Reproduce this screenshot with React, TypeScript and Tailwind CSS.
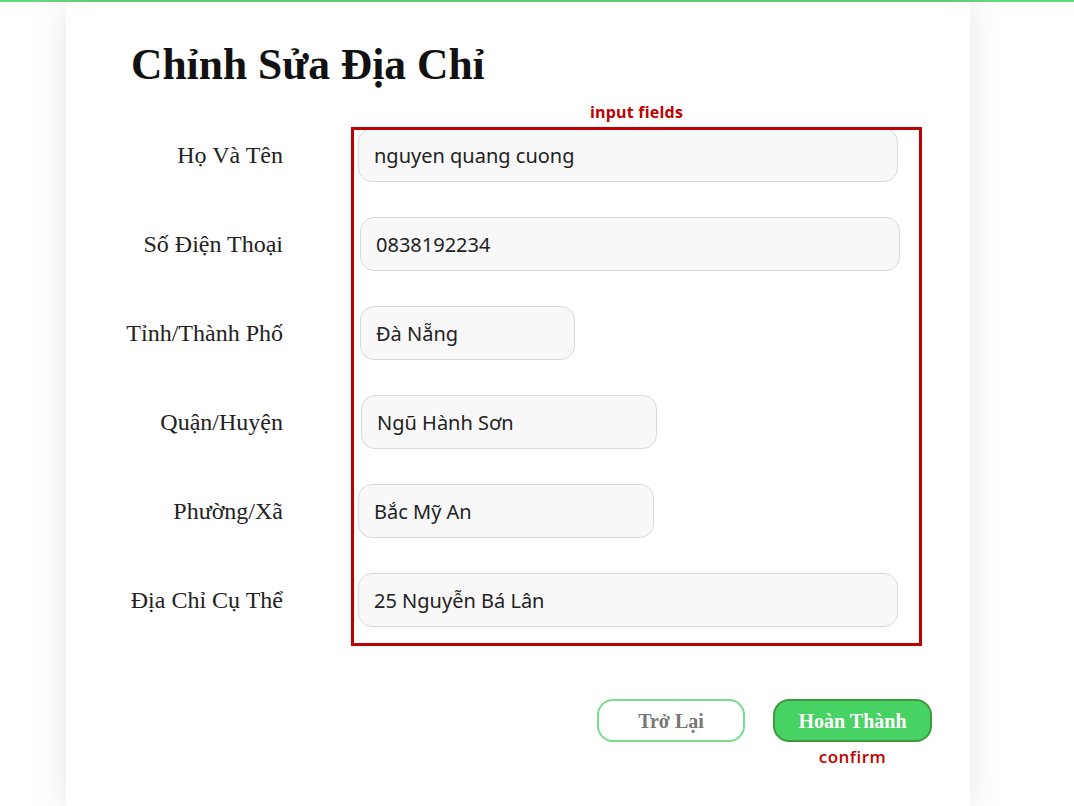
import React from "react";

interface Field {
  label: string;
  value: string;
  offset: number;
  width: number;
}

const fields: Field[] = [
  { label: "Họ Và Tên", value: "nguyen quang cuong", offset: 0, width: 540 },
  { label: "Số Điện Thoại", value: "0838192234", offset: 2, width: 540 },
  { label: "Tỉnh/Thành Phố", value: "Đà Nẵng", offset: 2, width: 215 },
  { label: "Quận/Huyện", value: "Ngũ Hành Sơn", offset: 3, width: 296 },
  { label: "Phường/Xã", value: "Bắc Mỹ An", offset: 0, width: 296 },
  { label: "Địa Chỉ Cụ Thể", value: "25 Nguyễn Bá Lân", offset: 0, width: 540 },
];

const serif = "font-['Liberation_Serif','Times_New_Roman',serif]";

const App: React.FC = () => {
  return (
    <div className="min-h-[806px] w-full bg-white border-t-2 border-[#62d97b]">
      <div className="ml-[66px] w-[904px] min-h-[804px] bg-white shadow-[0_0_36px_rgba(0,0,0,0.10)] pb-10">
        <h1
          className={`${serif} pt-[38px] pl-[65px] text-[43.5px] leading-[48px] font-bold text-[#111]`}
        >
          Chỉnh Sửa Địa Chỉ
        </h1>

        <div className="relative mt-[40px] flex flex-col gap-[35px]">
          {/* annotation overlay */}
          <div className="pointer-events-none absolute left-[285px] top-[-1px] h-[519px] w-[571px] border-[3px] border-[#c00000]" />
          <span className="pointer-events-none absolute left-[524px] top-[-28px] font-['Open_Sans',sans-serif] text-[16px] font-bold tracking-[0.2px] text-[#c00000]">
            input fields
          </span>

          {fields.map((f) => (
            <div key={f.label} className="flex h-[54px] items-center">
              <label
                className={`${serif} w-[217px] shrink-0 text-right text-[24px] text-[#222]`}
              >
                {f.label}
              </label>
              <input
                readOnly
                value={f.value}
                style={{ marginLeft: 75 + f.offset, width: f.width }}
                className="h-[54px] rounded-[14px] border-[1.5px] border-[#d9d9d9] bg-[#f8f8f8] px-[15px] font-['Noto_Sans',sans-serif] text-[20px] text-[#222] outline-none"
              />
            </div>
          ))}
        </div>

        <div className="mt-[72px] flex justify-end gap-[28px] pr-[38px]">
          <button
            className={`${serif} h-[43px] w-[148px] rounded-[16px] border-2 border-[#74dd8e] bg-white text-[20px] font-bold text-[#777]`}
          >
            Trở Lại
          </button>
          <div className="flex flex-col items-center">
            <button
              className={`${serif} h-[43px] w-[159px] rounded-[16px] border-2 border-[#3d9b3d] bg-[#48d264] text-[20px] font-bold text-white`}
            >
              Hoàn Thành
            </button>
            <span className="mt-[2px] font-['Open_Sans',sans-serif] text-[17px] font-semibold tracking-[0.5px] text-[#c00000]">
              confirm
            </span>
          </div>
        </div>
      </div>
    </div>
  );
};

export default App;
